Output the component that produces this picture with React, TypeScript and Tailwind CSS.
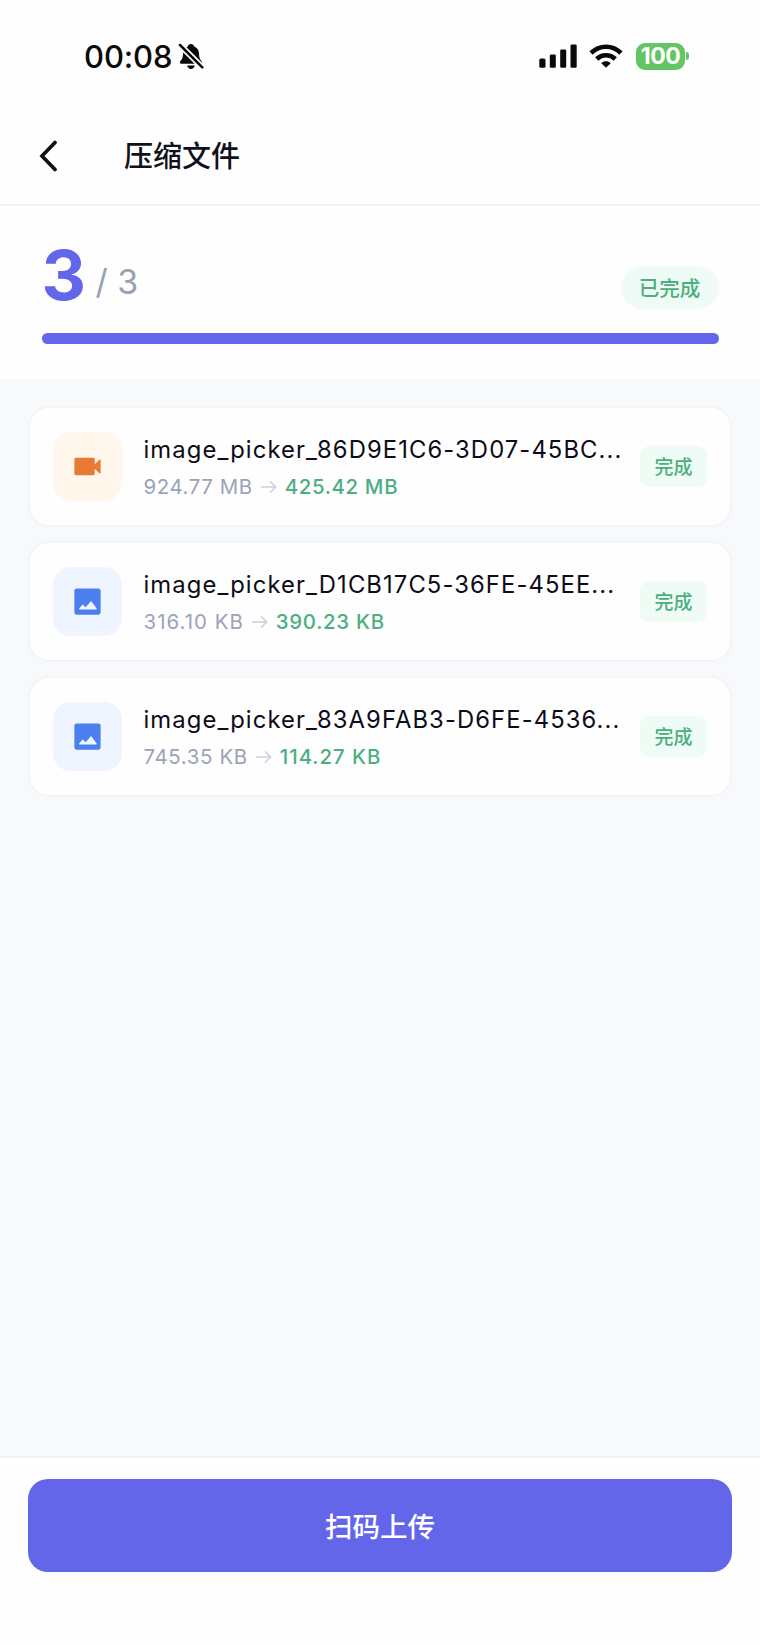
type FileItem = {
  kind: 'video' | 'image';
  name: string;
  before: string;
  beforeTracking: string;
  after: string;
  afterTracking: string;
};

const files: FileItem[] = [
  {
    kind: 'video',
    name: 'image_picker_86D9E1C6-3D07-45BC...',
    before: '924.77 MB',
    beforeTracking: 'tracking-[0.6px]',
    after: '425.42 MB',
    afterTracking: 'tracking-[0.65px]',
  },
  {
    kind: 'image',
    name: 'image_picker_D1CB17C5-36FE-45EE...',
    before: '316.10 KB',
    beforeTracking: 'tracking-[1.05px]',
    after: '390.23 KB',
    afterTracking: 'tracking-[0.7px]',
  },
  {
    kind: 'image',
    name: 'image_picker_83A9FAB3-D6FE-4536...',
    before: '745.35 KB',
    beforeTracking: 'tracking-[0.65px]',
    after: '114.27 KB',
    afterTracking: 'tracking-[0.95px]',
  },
];

function MutedBell() {
  return (
    <svg className="ml-[6px] h-[28px] w-[26px] shrink-0" viewBox="0 0 26 28">
      <path
        d="M13 2c1.700 0 2.800 1 3.300 2.400 3 1.200 4.500 3.900 4.700 7.100.2 4.500 1.100 6.200 2.700 7.800.9 1-.1 2.500-1.300 2.500H3.400c-1.400 0-2-1.500-1.200-2.500 1.900-2.200 2.700-3.300 2.900-7.800.1-3.200 1.700-5.900 4.600-7.100C10.200 3 11.300 2 13 2z"
        fill="#0a0a0a"
      />
      <path d="M9.200 23.600h7.600c-.4 2.200-1.900 3.400-3.800 3.400s-3.400-1.200-3.800-3.400z" fill="#0a0a0a" />
      <path d="M1 2L26 27" stroke="#fefefe" strokeWidth="6" />
      <path d="M2 3L24.300 25.300" stroke="#0a0a0a" strokeWidth="2.500" strokeLinecap="round" />
    </svg>
  );
}

function Signal() {
  return (
    <svg className="h-[25px] w-[38px]" viewBox="0 0 38 25" fill="#0a0a0a">
      <rect x="0.300" y="14.500" width="6.200" height="9.200" rx="1.500" />
      <rect x="10.800" y="10.500" width="6" height="13.200" rx="1.300" />
      <rect x="21.200" y="5.500" width="6" height="18.200" rx="1.300" />
      <rect x="31.500" y="0.500" width="6.200" height="23.200" rx="1.300" />
    </svg>
  );
}

function Wifi() {
  return (
    <svg className="ml-[12px] h-[25px] w-[34px]" viewBox="0 0 34 25">
      <g fill="none" stroke="#0a0a0a" strokeWidth="4.600">
        <path d="M2 9C10.400.6 23.600.6 32 9" />
        <path d="M7.700 15c5.200-5 13.400-5 18.600 0" />
      </g>
      <path d="M17 23.700l-4.700-4.500c2.700-2.500 6.700-2.500 9.400 0z" fill="#0a0a0a" />
    </svg>
  );
}

function FileIcon({ kind }: { kind: FileItem['kind'] }) {
  const video = kind === 'video';
  return (
    <div
      className={
        'flex size-[69px] shrink-0 items-center justify-center rounded-[18px] ' +
        (video ? 'bg-[#fff6ec]' : 'bg-[#eef5ff]')
      }
    >
      <svg viewBox="0 0 24 24" className="size-[35px]" fill={video ? '#e97a35' : '#4b80ee'}>
        {video ? (
          <path d="M17 10.500V7c0-.55-.45-1-1-1H4c-.55 0-1 .45-1 1v10c0 .55.45 1 1 1h12c.55 0 1-.45 1-1v-3.500l3.150 3.150c.32.32.85.1.85-.35V7.700c0-.45-.53-.67-.85-.35L17 10.500z" />
        ) : (
          <path
            fillRule="evenodd"
            d="M19.500 3h-15C3.670 3 3 3.670 3 4.500v15c0 .83.67 1.500 1.500 1.500h15c.83 0 1.500-.67 1.500-1.500v-15c0-.83-.67-1.500-1.500-1.500zM6.800 17.500c-.5 0-.7-.5-.4-.9l1.900-2.200c.2-.25.6-.25.8 0l1.700 1.600 3.200-3.900c.2-.3.6-.3.800 0l3.400 4.500c.3.4.1.9-.4.900z"
          />
        )}
      </svg>
    </div>
  );
}

function FileCard({ file }: { file: FileItem }) {
  return (
    <li className="flex h-[121px] items-center rounded-[21px] border-2 border-[#f1f4f8] bg-[#fefefe] pr-[23.5px] pl-[23px]">
      <FileIcon kind={file.kind} />
      <div className="mt-[2px] ml-[21.5px] w-[496.5px] shrink-0">
        <p className="text-[23.8px] leading-[32px] font-normal tracking-[1.1px] whitespace-nowrap text-[#0d0c18]">{file.name}</p>
        <div className="mt-[6px] flex items-center text-[20.4px] leading-[30px] whitespace-nowrap">
          <span className={'text-[#9ca3b7] ' + file.beforeTracking}>{file.before}</span>
          <svg className="mx-[8px] h-[14px] w-[16px]" viewBox="0 0 16 14" fill="none" stroke="#cbcfdb" strokeWidth="1.500">
            <path d="M0 7h14.500M9 1.300L14.700 7 9 12.700" />
          </svg>
          <span className={'font-medium text-[#4caf80] ' + file.afterTracking}>{file.after}</span>
        </div>
      </div>
      <span className="flex h-[41px] w-[67px] shrink-0 items-center justify-center rounded-[9px] bg-[#effcf5] pt-[3px] text-[19px] font-medium text-[#4caf80]">
        完成
      </span>
    </li>
  );
}

export default function App() {
  return (
    <div className="flex h-[1645px] w-[760px] flex-col overflow-hidden bg-[#f7f9fb] font-['Inter','Noto_Sans_CJK_SC',sans-serif]">
      <header className="h-[206px] shrink-0 border-b-2 border-[#f1f3f8] bg-[#fefefe]">
        <div className="flex h-[112px] items-center justify-between pr-[71px] pl-[84px]">
          <div className="flex items-center">
            <span className="pt-px text-[31px] leading-[40px] font-medium tracking-[-0.1px] text-[#0a0a0a]">00:08</span>
            <MutedBell />
          </div>
          <div className="flex items-center">
            <Signal />
            <Wifi />
            <div className="ml-[13px] flex h-[27px] w-[49px] items-center justify-center rounded-[9px] bg-[#65c466] text-[23px] font-bold tracking-[-0.5px] text-white">
              100
            </div>
            <div className="ml-[1px] h-[8px] w-[3px] rounded-r-full bg-[#65c466]" />
          </div>
        </div>
        <div className="flex h-[88px] items-center pl-[39px]">
          <svg className="mb-[1px] h-[32px] w-[18px]" viewBox="0 0 18 32" fill="none" stroke="#11111c" strokeWidth="3.700" strokeLinecap="round" strokeLinejoin="miter">
            <path d="M16 2.500L3 16l13 13.500" />
          </svg>
          <h1 className="ml-[67px] pt-[2px] text-[29px] font-medium text-[#11111c]">压缩文件</h1>
        </div>
      </header>

      <section className="h-[173px] shrink-0 bg-[#fefefe] px-[41.5px]">
        <div className="flex h-[127px] items-end justify-between">
          <div className="mb-[16px] flex items-end">
            <span className="text-[69px] leading-[84px] font-bold tracking-[-1px] text-[#6366e8]">3</span>
            <span className="mb-[13px] ml-[10.5px] text-[34px] leading-[44px] text-[#98a2b5]">/ 3</span>
          </div>
          <span className="mb-[24px] flex h-[43px] w-[98px] items-center justify-center rounded-full bg-[#eefcf5] pt-[3px] text-[20.5px] font-medium text-[#4caf80]">
            已完成
          </span>
        </div>
        <div className="h-[11px] rounded-full bg-[#6366e8]" />
      </section>

      <ul className="flex grow flex-col gap-[14px] px-[28px] pt-[27px]">
        {files.map((file) => (
          <FileCard key={file.name} file={file} />
        ))}
      </ul>

      <footer className="h-[189px] shrink-0 border-t-2 border-[#f0f3f9] bg-[#fefefe] px-[28px] pt-[21px]">
        <button className="flex h-[93px] w-full items-center justify-center rounded-[20px] bg-[#6366e8] pt-[4px] text-[27.5px] font-medium text-white">
          扫码上传
        </button>
      </footer>
    </div>
  );
}
